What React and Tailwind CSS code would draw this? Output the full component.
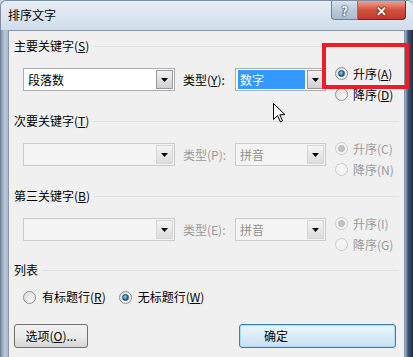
import React from "react";

const FONT = { fontFamily: '"Noto Sans CJK SC", "Microsoft YaHei", "Noto Sans", sans-serif' };

function Radio({ checked, disabled }) {
  if (disabled) {
    return (
      <span className="w-[13px] h-[13px] rounded-full border border-[#c9cbcd] bg-[#f4f4f4] flex items-center justify-center shrink-0">
        {checked && <span className="w-[7px] h-[7px] rounded-full bg-[#c2c4c6] border border-[#b0b3b5]" />}
      </span>
    );
  }
  return (
    <span className="w-[13px] h-[13px] rounded-full border border-[#8e8f8f] bg-gradient-to-br from-[#dcdcdc] to-[#fafafa] flex items-center justify-center shrink-0">
      {checked && (
        <span className="w-[7px] h-[7px] rounded-full bg-[radial-gradient(circle_at_40%_35%,#9fdcf7,#1f6aa3_60%,#0f3f6a)] border border-[#1b4f7a]" />
      )}
    </span>
  );
}

function DropBtn({ disabled }) {
  return (
    <div
      className={
        "w-[17px] self-stretch m-[1px] flex items-center justify-center border " +
        (disabled
          ? "border-[#d4d6d8] bg-gradient-to-b from-[#f4f4f4] to-[#dcdcdc]"
          : "border-[#9a9a9a] bg-gradient-to-b from-[#f3f3f3] to-[#cfcfcf]")
      }
    >
      <svg width="7" height="4" viewBox="0 0 7 4">
        <path d="M0 0H7L3.5 4Z" fill="#000" />
      </svg>
    </div>
  );
}

function Combo({ width, text, disabled, selected }) {
  return (
    <div
      className={
        "h-[23px] flex border " +
        (disabled ? "bg-[#f4f4f4] border-[#c8cbce]" : "bg-white border-[#abadb3]")
      }
      style={{ width }}
    >
      <div className="flex-1 flex items-center pl-[2px] pr-[1px] py-[1px]">
        {selected ? (
          <div className="w-full h-full bg-[#3399ff] text-white flex items-center pl-[2px] text-[12px] leading-[16px]">
            {text}
          </div>
        ) : (
          <span className={"pl-[2px] text-[12px] leading-[16px] " + (disabled ? "text-[#8f8f8f]" : "text-black")}>{text}</span>
        )}
      </div>
      <DropBtn disabled={disabled} />
    </div>
  );
}

function Header({ children }) {
  return (
    <div className="flex items-center h-[16px] pl-[5px]">
      <span className="text-[12px] leading-[16px] text-black whitespace-nowrap">{children}</span>
      <div className="flex-1 h-px bg-[#dde1e6] ml-[4px]" />
    </div>
  );
}

function Group({ title, main, typeLabel, typeText, selected, disabled, r1, r2 }) {
  const tc = disabled ? "text-[#9a9a9a]" : "text-black";
  return (
    <div>
      <Header>{title}</Header>
      <div className="flex items-start ml-[14px]">
        <div className="flex items-center mt-[14px]">
          <Combo width={152} text={main} disabled={disabled} />
          <span className={"ml-[8px] w-[52px] text-[12px] leading-[16px] whitespace-nowrap " + tc}>{typeLabel}</span>
          <Combo width={91} text={typeText} disabled={disabled} selected={selected} />
        </div>
        <div className="ml-[9px] mt-[9px] flex flex-col">
          <div className="h-[21px] flex items-center gap-[5px]">
            <Radio checked disabled={disabled} />
            <span className={"text-[12px] leading-[16px] whitespace-nowrap " + tc}>{r1}</span>
          </div>
          <div className="h-[21px] flex items-center gap-[5px]">
            <Radio disabled={disabled} />
            <span className={"text-[12px] leading-[16px] whitespace-nowrap " + tc}>{r2}</span>
          </div>
        </div>
      </div>
    </div>
  );
}

const U = ({ children }) => <span className="underline">{children}</span>;

export default function App() {
  return (
    <div className="relative w-[413px] h-[357px] overflow-hidden bg-[#c9d6e4]" style={FONT}>
      {/* title bar */}
      <div className="h-[30px] flex items-start bg-gradient-to-b from-[#e6eef6] via-[#dce6f0] to-[#cfdcea] rounded-t-[6px] border-t border-l border-[#7a8ea6]">
        <span className="ml-[7px] mt-[6px] text-[12px] leading-[16px] text-black">排序文字</span>
        <div className="ml-auto mr-[7px] flex">
          <div className="w-[27px] h-[19px] rounded-bl-[4px] border border-t-0 border-[#6b7f96] bg-gradient-to-b from-[#d9e3ee] via-[#bccadb] to-[#a9bbcf] flex items-center justify-center">
            <span className="text-white font-bold text-[13px] leading-none" style={{ textShadow: "0 0 1px #2b3b52, 0 0 1px #2b3b52, 0 0 2px #2b3b52" }}>?</span>
          </div>
          <div className="w-[48px] h-[19px] rounded-br-[4px] border border-t-0 border-l-0 border-[#6b2a22] bg-gradient-to-b from-[#e8a395] via-[#d2503f] to-[#c03a2b] flex items-center justify-center">
            <span className="text-white font-bold text-[13px] leading-none" style={{ textShadow: "0 0 1px #4a1510, 0 0 1px #4a1510, 0 0 2px #4a1510" }}>✕</span>
          </div>
        </div>
      </div>
      <div className="flex h-[327px]">
        <div className="w-[8px] bg-gradient-to-r from-[#8597ac] via-[#b7c6d6] to-[#a9bacd] border-l border-[#6f8298]" />
        <div className="flex-1 bg-[#f0f0f0] border border-b-0 border-[#8397ad] pt-[7px] pr-[5px]">
          <Group
            title={<>主要关键字(<U>S</U>)</>}
            main="段落数"
            typeLabel={<>类型(<U>Y</U>):</>}
            typeText="数字"
            selected
            r1={<>升序(<U>A</U>)</>}
            r2={<>降序(<U>D</U>)</>}
          />
          <div className="h-[8px]" />
          <Group
            title={<>次要关键字(<U>T</U>)</>}
            main=""
            typeLabel="类型(P):"
            typeText="拼音"
            disabled
            r1="升序(C)"
            r2="降序(N)"
          />
          <div className="h-[8px]" />
          <Group
            title={<>第三关键字(<U>B</U>)</>}
            main=""
            typeLabel="类型(E):"
            typeText="拼音"
            disabled
            r1="升序(I)"
            r2="降序(G)"
          />
          <div className="h-[7px]" />
          <Header>列表</Header>
          <div className="flex items-center ml-[14px] mt-[9px] h-[20px] text-[12px] leading-[16px]">
            <Radio />
            <span className="ml-[6px]">有标题行(<U>R</U>)</span>
            <span className="ml-[13px]"><Radio checked /></span>
            <span className="ml-[6px]">无标题行(<U>W</U>)</span>
          </div>
          <div className="flex items-center mt-[17px] ml-[5px]">
            <button className="w-[74px] h-[24px] rounded-[3px] border border-[#707070] bg-gradient-to-b from-[#f2f2f2] via-[#ebebeb] to-[#d6d6d6] text-[12px] leading-[16px] text-black flex items-center justify-center">
              选项(<U>O</U>)...
            </button>
            <button className="ml-auto mr-[3px] w-[157px] h-[24px] rounded-[3px] border border-[#3c7fb1] bg-gradient-to-b from-[#eaf6fd] via-[#d9ecf8] to-[#c6e0f1] text-[12px] leading-[16px] text-black flex items-center pl-[24px] shadow-[inset_0_0_0_1px_#a6dcf6]">
              确定
            </button>
          </div>
        </div>
        <div className="w-[8px] bg-gradient-to-r from-[#9fb2c7] via-[#3a4f6e] to-[#27385a] border-r border-[#1d2a42]" />
      </div>

      {/* red highlight overlay */}
      <div className="absolute left-[322px] top-[43px] w-[87px] h-[46px] border-[4px] border-[#ee1c24]" />
      {/* mouse cursor */}
      <svg className="absolute left-[273px] top-[103px]" width="13" height="20" viewBox="0 0 13 20">
        <path d="M0.5 0.5 V16.5 L4.5 12.5 L7.5 19 L9.5 18 L6.8 11.7 L12 11.7 Z" fill="#fff" stroke="#000" strokeWidth="1" strokeLinejoin="miter" />
      </svg>
    </div>
  );
}
